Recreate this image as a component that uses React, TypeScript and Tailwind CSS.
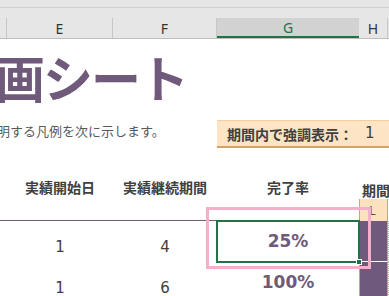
const jp = { fontFamily: '"Noto Sans CJK JP", "Noto Sans", sans-serif' };
const num = { fontFamily: '"DejaVu Sans", Verdana, sans-serif' };
const ui = { fontFamily: '"Noto Sans", "Open Sans", sans-serif' };

const cols = [
  { id: "D", w: "w-[7px]" },
  { id: "E", w: "w-[106px]" },
  { id: "F", w: "w-[104px]" },
  { id: "G", w: "w-[142px]" },
  { id: "H", w: "w-[29px]" },
];

function ColumnHeaders() {
  return (
    <div className="flex h-[21px] border-b border-[#bdbdbd] bg-[#e6e6e6]" style={ui}>
      {cols.map((c) =>
        c.id === "G" ? (
          <div
            key={c.id}
            className={`${c.w} flex items-center justify-center border-b-2 border-[#217346] bg-[#d2d2d2] text-[14px] text-[#217346]`}
          >
            G
          </div>
        ) : (
          <div
            key={c.id}
            className={`${c.w} flex items-center justify-center border-r border-[#c6c6c6] text-[14px] text-[#333]`}
          >
            {c.id === "D" ? "" : c.id}
          </div>
        )
      )}
    </div>
  );
}

export default function App() {
  return (
    <div className="relative h-[296px] w-[389px] overflow-hidden bg-white">
      <div className="h-[8px] border-b border-[#d0d0d0] bg-[#e6e6e6]" />
      <div className="h-[10px] bg-[#e6e6e6]" />
      <ColumnHeaders />

      {/* title, scrolled so the sheet starts mid-word */}
      <div className="h-[71px] overflow-hidden whitespace-nowrap" style={jp}>
        <div className="-ml-[53px] pt-[12px] text-[50px] font-bold leading-none tracking-[-2px] text-[#6f5a7b]">
          計画シート
        </div>
      </div>

      {/* legend note + highlight box */}
      <div className="flex h-[42px]">
        <div className="w-[217px] overflow-hidden whitespace-nowrap pt-[14px]" style={jp}>
          <div className="-ml-[16px] text-[13px] leading-none text-[#595959]">説明する凡例を次に示します。</div>
        </div>
        <div className="mt-[10px] flex h-[28px] flex-1 items-center border-t border-b-2 border-t-[#f3cf9f] border-b-[#d3a264] bg-[#fce4c4] pl-[10px]">
          <span className="text-[14px] font-bold leading-none text-[#404040]" style={jp}>
            期間内で強調表示：
          </span>
          <span className="ml-[12px] text-[15px] leading-none text-[#404040]" style={num}>
            1
          </span>
        </div>
      </div>

      {/* column labels */}
      <div className="flex h-[69px]" style={jp}>
        <div className="w-[7px] border-b border-[#6f5a7b]" />
        <div className="flex w-[106px] justify-center border-b border-[#6f5a7b] pt-[25px] text-[14px] font-bold text-[#404040]">
          実績開始日
        </div>
        <div className="flex w-[104px] justify-center border-b border-[#6f5a7b] pt-[25px] text-[14px] font-bold text-[#404040]">
          実績継続期間
        </div>
        <div className="flex w-[142px] justify-center border-b border-[#6f5a7b] pt-[25px] text-[14px] font-bold text-[#404040]">
          完了率
        </div>
        <div className="flex w-[29px] flex-col">
          <div className="whitespace-nowrap pl-[3px] pt-[30px] text-[14px] font-bold leading-[17px] text-[#404040]">期間</div>
          <div className="mt-auto h-[22px] border-x border-[#d9a35b] bg-[#fbe1bd] pl-[9px] text-[13px] leading-[22px] text-[#555]" style={ui}>
            L
          </div>
        </div>
      </div>

      {/* data rows */}
      {[
        { start: "1", dur: "4", pct: "25%" },
        { start: "1", dur: "6", pct: "100%" },
      ].map((r, i) => (
        <div key={i} className="flex h-[41px]">
          <div className="w-[7px]" />
          <div className="flex w-[106px] items-end justify-center pb-[4px] text-[15px] text-[#404040]" style={num}>
            {r.start}
          </div>
          <div className="flex w-[104px] items-end justify-center pb-[4px] text-[15px] text-[#404040]" style={num}>
            {r.dur}
          </div>
          <div className="flex w-[142px] items-center justify-center pt-[1px] text-[17px] font-bold text-[#6f5a7b]" style={num}>
            {r.pct}
          </div>
          <div className="w-[29px] border-x border-b border-[#d9a35b] border-b-white bg-[#6f5a7b]" />
          <div className="flex-1 border-l border-dotted border-[#c9a9a0]" />
        </div>
      ))}

      {/* active cell selection */}
      <div className="absolute left-[216px] top-[220px] h-[43px] w-[144px] border-2 border-[#217346]">
        <div className="absolute -bottom-[4px] -right-[4px] h-[6px] w-[6px] border border-white bg-[#217346]" />
      </div>

      {/* pink callout frame */}
      <div className="absolute left-[206px] top-[207px] h-[62px] w-[165px] border-[3px] border-[#f4afc9]" />
    </div>
  );
}
